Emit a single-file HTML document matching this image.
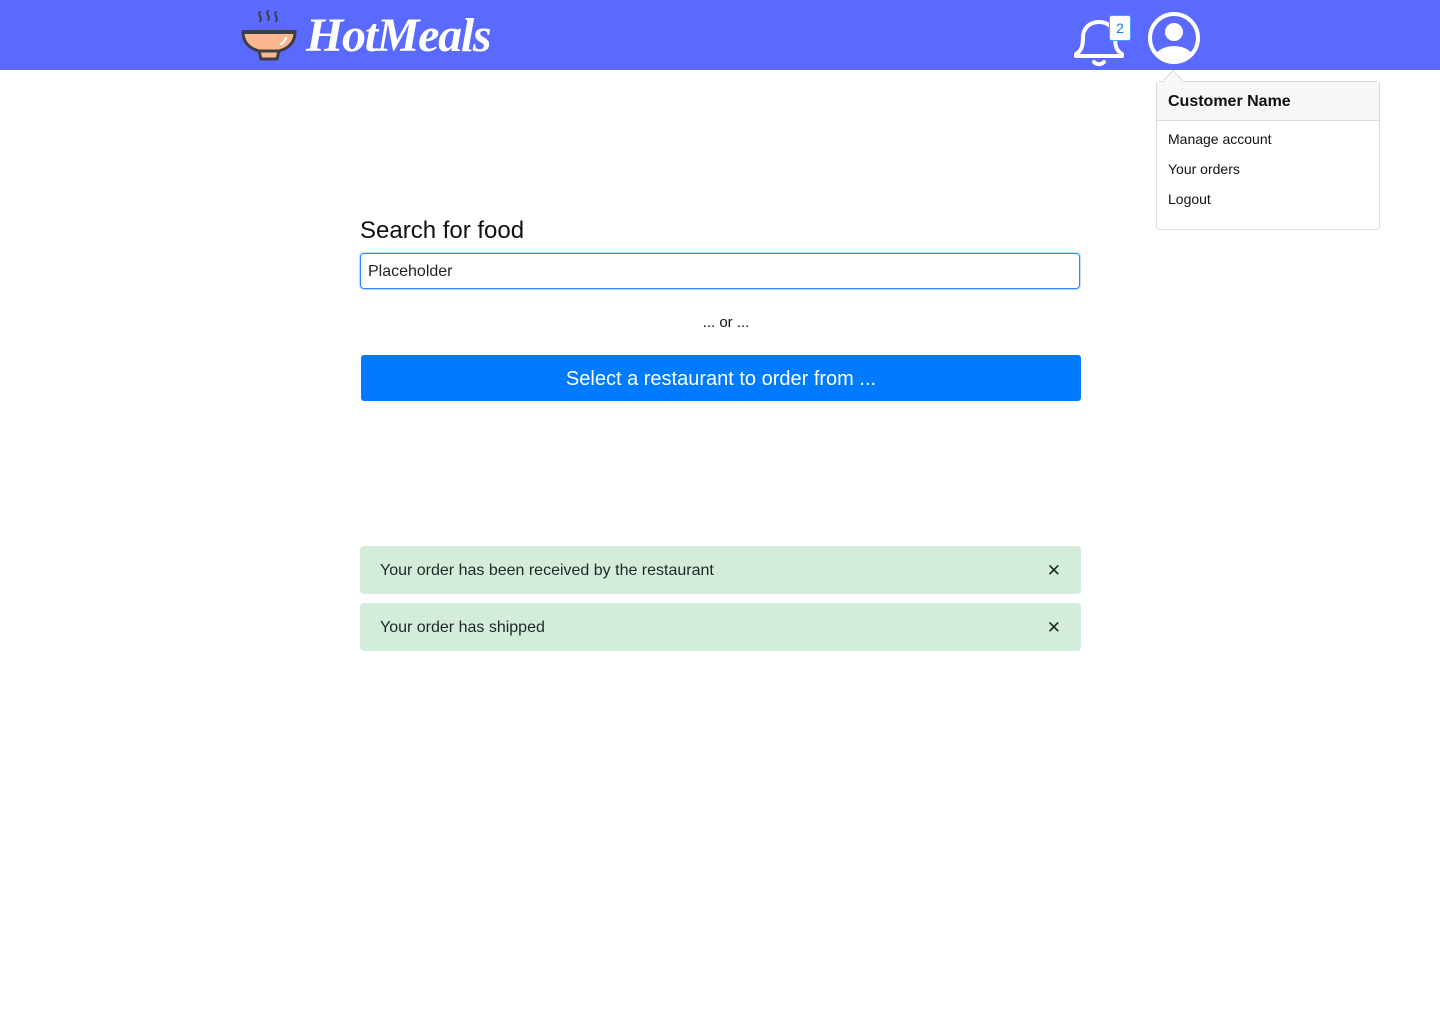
<!DOCTYPE html>
<html><head><meta charset="utf-8"><style>
*{box-sizing:border-box}
body{margin:0;width:1440px;height:1024px;background:#fff;font-family:"Liberation Sans",sans-serif;color:#212529;position:relative;overflow:hidden}
.hdr{position:absolute;left:0;top:0;width:1440px;height:70px;background:#5a6afe}
.logo{position:absolute;left:306px;top:8px;color:#fff;font-family:"Liberation Serif",serif;font-style:italic;font-weight:bold;font-size:48px;letter-spacing:-1.3px}
.badge{position:absolute;left:1109px;top:15px;width:22px;height:26px;background:#fff;border:1px solid #4aa3ff;border-radius:3px;color:#1c7cff;font-size:14px;text-align:center;line-height:24px}
.dd{position:absolute;left:1156px;top:81px;width:224px;height:149px;border:1px solid #ddd;border-radius:3px;background:#fff}
.dd .h{height:39px;background:#f7f8fa;border-bottom:1px solid #ddd;padding:11px 11px;font-weight:bold;font-size:16px;color:#111}
.dd .i{font-size:14px;padding:0 11px;height:30px;line-height:36px;color:#111}
.arrow{position:absolute;left:1166px;top:73px;width:14px;height:14px;background:#f7f8fa;border-left:1px solid #ddd;border-top:1px solid #ddd;transform:rotate(45deg)}
.lbl{position:absolute;left:360px;top:217px;font-size:24px;color:#111}
.inp{position:absolute;left:360px;top:253px;width:720px;height:36px;border:1px solid #2b86ff;border-radius:4px;box-shadow:0 0 0 1px rgba(0,123,255,.25);padding:0 7px;line-height:36px;font-size:16px;color:#222}
.or{position:absolute;left:0;width:1452px;top:314px;text-align:center;font-size:15px;color:#111}
.btn{position:absolute;left:361px;top:355px;width:720px;height:46px;background:#007bff;border-radius:3px;color:#fff;font-size:20px;text-align:center;line-height:48px}
.al{position:absolute;left:360px;width:721px;height:48px;background:#d4ecdb;border-radius:4px;font-size:16px;color:#1d2a22;padding:0 20px;line-height:49px}
.al span{position:absolute;right:20px;top:0;font-size:17px}
</style></head><body>
<div class="hdr">
<svg style="position:absolute;left:240px;top:8px" width="58" height="54" viewBox="0 0 58 54">
<g fill="none" stroke="#3d3f44" stroke-width="2" stroke-linecap="round"><path d="M20 4c-3 3 3 5 0 9M28 3c-3 3 3 5 0 9M36 4c-3 3 3 5 0 9"/></g>
<path d="M3 24h52c0 12-9 20-26 20S3 36 3 24z" fill="#f9b68f" stroke="#3d3f44" stroke-width="3"/>
<path d="M19 43h20l-2 8H21z" fill="#f9b68f" stroke="#3d3f44" stroke-width="3"/>
<path d="M3 24h52" stroke="#3d3f44" stroke-width="4"/>
<path d="M46 30c-1 3-3 5-5 6" stroke="#fff" stroke-width="2" fill="none" stroke-linecap="round"/>
</svg>
<div class="logo">HotMeals</div>
<svg style="position:absolute;left:1072px;top:14px" width="58" height="56" viewBox="0 0 58 56">
<path d="M4 40c5-3 7-7 7-17 0-9 7-15 16-15s16 6 16 15c0 10 2 14 7 17v2H4z" fill="none" stroke="#fff" stroke-width="4" stroke-linejoin="round"/>
<path d="M22 48c3 3 7 3 10 0" stroke="#fff" stroke-width="4" fill="none" stroke-linecap="round"/>
</svg>
<div class="badge">2</div>
<svg style="position:absolute;left:1147px;top:11px" width="54" height="54" viewBox="0 0 54 54">
<defs><clipPath id="c"><circle cx="27" cy="27" r="22"/></clipPath></defs>
<circle cx="27" cy="27" r="24" fill="none" stroke="#fff" stroke-width="4"/>
<circle cx="27" cy="21" r="9" fill="#fff"/>
<ellipse cx="27" cy="52" rx="22" ry="17" fill="#fff" clip-path="url(#c)"/>
</svg>
</div>
<div class="dd"><div class="h">Customer Name</div><div class="i">Manage account</div><div class="i">Your orders</div><div class="i">Logout</div></div>
<div class="arrow"></div>
<div class="lbl">Search for food</div>
<div class="inp">Placeholder</div>
<div class="or">... or ...</div>
<div class="btn">Select a restaurant to order from ...</div>
<div class="al" style="top:546px">Your order has been received by the restaurant<span>✕</span></div>
<div class="al" style="top:603px">Your order has shipped<span>✕</span></div>
</body></html>
